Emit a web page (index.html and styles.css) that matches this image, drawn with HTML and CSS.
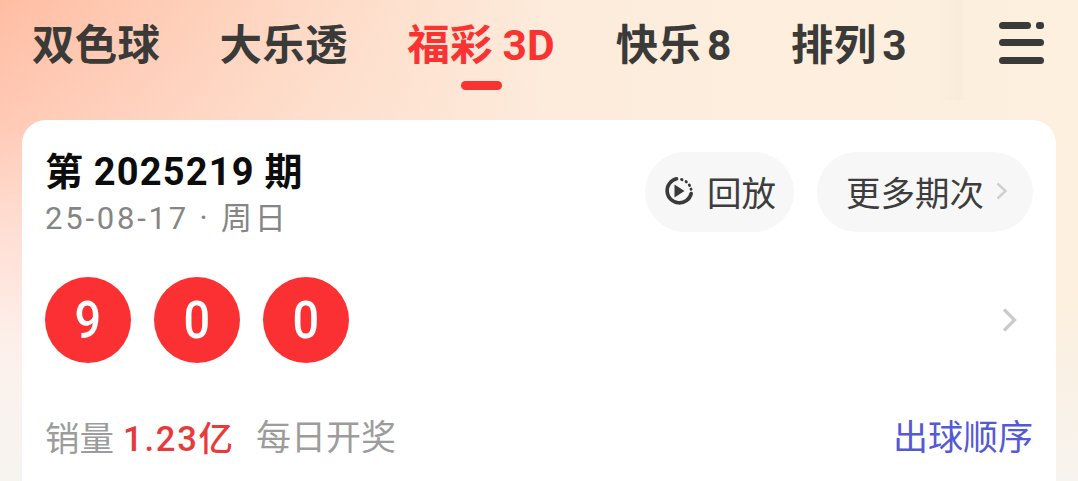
FILE: index.html
```html
<!DOCTYPE html>
<html lang="zh-CN">
<head>
<meta charset="utf-8">
<title>开奖</title>
<link rel="stylesheet" href="styles.css">
</head>
<body>
<div class="page">
  <nav class="nav">
    <div class="tabs">
      <span class="tab">双色球</span>
      <span class="tab">大乐透</span>
      <span class="tab active">福彩 3D</span>
      <span class="tab">快乐 8</span>
      <span class="tab">排列 3</span>
    </div>
    <svg class="menu" width="48" height="44" viewBox="0 0 48 44" aria-hidden="true">
      <g fill="#3a3a38">
        <rect x="1" y="0" width="32" height="7" rx="3.5"/>
        <rect x="38" y="0" width="8" height="7" rx="3"/>
        <rect x="1" y="17" width="45" height="7" rx="3.5"/>
        <rect x="1" y="35" width="45" height="7" rx="3.5"/>
      </g>
    </svg>
  </nav>
  <main class="card">
    <div class="head">
      <div class="issue">
        <div class="issue-title">第 2025219 期</div>
        <div class="issue-date">25-08-17 · 周日</div>
      </div>
      <div class="actions">
        <button class="pill replay">
          <svg width="30" height="30" viewBox="0 0 30 30" aria-hidden="true">
            <path d="M12.500 2.800A12.200 12.200 0 1 0 27.200 17.500" fill="none" stroke="#3a3a3a" stroke-width="3.600" stroke-linecap="round"/>
            <path d="M17.500 3.500l.6.2M22 5.500l.4.4M25.300 9l.3.5M27 13l.1.4" fill="none" stroke="#3a3a3a" stroke-width="2.800" stroke-linecap="round"/>
            <path d="M10.500 8.500l10 6.500-10 6.500z" fill="#3a3a3a"/>
          </svg>
          <span>回放</span>
        </button>
        <button class="pill more">
          <span>更多期次</span>
          <svg width="12" height="18" viewBox="0 0 12 18" aria-hidden="true"><path d="M1.500 1.500l8 7.500-8 7.500" fill="none" stroke="#cfcfcf" stroke-width="2.400"/></svg>
        </button>
      </div>
    </div>
    <div class="balls-row">
      <div class="balls">
        <span class="ball"><span class="digit">9</span></span>
        <span class="ball"><span class="digit">0</span></span>
        <span class="ball"><span class="digit">0</span></span>
      </div>
      <svg width="18" height="26" viewBox="0 0 18 26" aria-hidden="true"><path d="M3 2.500l10.500 10.500L3 23.500" fill="none" stroke="#cbcbcb" stroke-width="3.200"/></svg>
    </div>
    <div class="foot">
      <div class="sales">
        <span>销量</span>
        <span class="amount">1.23亿</span>
        <span class="daily">每日开奖</span>
      </div>
      <span class="order">出球顺序</span>
    </div>
  </main>
</div>
</body>
</html>
```

FILE: styles.css
```css
* { box-sizing: border-box; }
html, body { margin: 0; padding: 0; height: 481px; overflow: hidden; }
body { font-family: "Roboto", "Noto Sans CJK SC", sans-serif; }
.page {
  height: 481px;
  overflow: hidden;
  padding: 0 22px;
  background:
    linear-gradient(to right, rgba(120, 110, 90, 0) 938px, rgba(120, 110, 90, 0.03) 960px, rgba(120, 110, 90, 0) 966px) 0 0 / 100% 100px no-repeat,
    linear-gradient(to bottom, rgba(247, 243, 238, 0) 60%, #f7f3ee 100%),
    linear-gradient(to right, rgba(253, 236, 220, 0) 0, rgba(253, 236, 220, 0.6) 28%, #fdecdc 52%, #fdf0de 100%),
    linear-gradient(to bottom, #ffbda3 0, #ffc9b5 25%, #ffe0d6 50%, #fff0ec 75%, #fbf6f3 100%);
}
.nav {
  height: 120px;
  display: flex;
  align-items: flex-start;
  justify-content: space-between;
  padding: 22px 10px 0 10px;
}
.tabs { display: flex; gap: 59.500px; }
.tab {
  position: relative;
  font-size: 42.500px;
  line-height: 47px;
  font-weight: 700;
  color: #3a3a38;
  white-space: nowrap;
  word-spacing: -5px;
  letter-spacing: 0.2px;
}
.tab.active { color: #f93332; word-spacing: -1px; margin-right: 1.500px; }
.tab.active::after {
  content: "";
  position: absolute;
  left: 54px;
  top: 59px;
  width: 41px;
  height: 9px;
  border-radius: 5px;
  background: #f93332;
}
.card {
  height: 380px;
  background: #fff;
  border-radius: 24px 24px 0 0;
  padding: 30px 23px 0 23px;
}
.head { display: flex; justify-content: space-between; align-items: flex-start; }
.issue-title {
  font-size: 38px;
  line-height: 44px;
  font-weight: 700;
  color: #0c0c0c;
  word-spacing: -1px;
  letter-spacing: 1.200px;
}
.issue-date {
  font-size: 31px;
  line-height: 46px;
  margin-top: 2px;
  color: #858585;
  letter-spacing: 2.800px;
}
.actions { display: flex; gap: 23px; margin-top: 2px; }
.pill {
  height: 80px;
  border: 0;
  border-radius: 40px;
  background: #f7f7f7;
  display: flex;
  align-items: center;
  font-family: inherit;
  font-size: 34.500px;
  color: #3d3d3d;
  padding: 0 0 3px;
}
.replay { width: 149px; padding-left: 19px; gap: 13px; }
.more { width: 216px; padding-left: 29px; gap: 12px; }
.balls-row {
  display: flex;
  justify-content: space-between;
  align-items: center;
  margin-top: 35px;
  padding-right: 14px;
}
.balls { display: flex; gap: 23px; }
.ball {
  width: 86px;
  height: 86px;
  border-radius: 50%;
  background: #fb3033;
  color: #fff;
  font-size: 52px;
  font-weight: 500;
  display: flex;
  align-items: center;
  justify-content: center;
}
.digit { display: inline-block; transform: scaleX(0.9); }
.foot {
  display: flex;
  justify-content: space-between;
  align-items: center;
  margin-top: 53px;
  font-size: 34.500px;
  line-height: 46px;
}
.sales { display: flex; color: #9c9c9c; gap: 9px; }
.amount { color: #e93a3b; font-weight: 500; letter-spacing: 1.800px; }
.daily { margin-left: 12px; font-size: 35px; }
.order { color: #5459d6; font-size: 35px; }
```
